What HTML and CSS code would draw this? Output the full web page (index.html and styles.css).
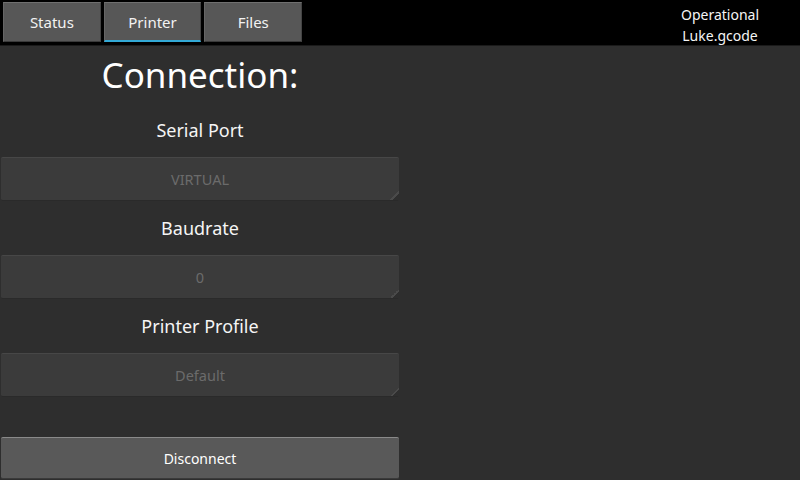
FILE: index.html
```html
<!DOCTYPE html>
<html>
<head>
<meta charset="utf-8">
<link rel="stylesheet" href="styles.css">
</head>
<body>
<div class="screen">
  <header class="topbar">
    <nav class="tabs">
      <div class="tab">Status</div>
      <div class="tab active">Printer</div>
      <div class="tab">Files</div>
    </nav>
    <div class="state">
      <div>Operational</div>
      <div>Luke.gcode</div>
    </div>
  </header>
  <main class="panel">
    <div class="col">
      <h1 class="title">Connection:</h1>
      <div class="label">Serial Port</div>
      <div class="spinner">VIRTUAL</div>
      <div class="label">Baudrate</div>
      <div class="spinner">0</div>
      <div class="label">Printer Profile</div>
      <div class="spinner">Default</div>
      <div class="spacer"></div>
      <div class="button">Disconnect</div>
    </div>
  </main>
</div>
</body>
</html>
```

FILE: styles.css
```css
* { box-sizing: border-box; }
html, body { margin: 0; padding: 0; }
body {
  width: 800px;
  height: 480px;
  overflow: hidden;
  background: #2e2e2e;
  font-family: "Noto Sans", "Open Sans", "DejaVu Sans", sans-serif;
  color: #ffffff;
}
.screen {
  width: 800px;
  height: 480px;
  display: flex;
  flex-direction: column;
}
.topbar {
  height: 46px;
  background: #000000;
  display: flex;
  justify-content: space-between;
  border-bottom: 1px solid #1a1a1a;
}
.tabs {
  display: flex;
  gap: 3px;
  padding: 2px 0 0 3px;
}
.tab {
  width: 97.7px;
  height: 40px;
  background: #575757;
  border-top: 1px solid #707070;
  border-left: 1px solid #666666;
  border-right: 1px solid #444444;
  border-bottom: 1px solid #3a3a3a;
  display: flex;
  align-items: center;
  justify-content: center;
  font-size: 15px;
  color: #f2f2f2;
}
.tab.active {
  border-bottom: 2px solid #33a9d6;
}
.state {
  width: 160px;
  padding-top: 4px;
  text-align: center;
  font-size: 14px;
  line-height: 21px;
  color: #f5f5f5;
}
.panel {
  flex: 1;
  display: flex;
}
.col {
  width: 400px;
  display: flex;
  flex-direction: column;
  padding: 0 1px;
}
.title {
  margin: 0;
  height: 57px;
  font-size: 35px;
  font-weight: normal;
  line-height: 57px;
  text-align: center;
  color: #ffffff;
}
.label {
  height: 54px;
  line-height: 54px;
  font-size: 18px;
  text-align: center;
  color: #f5f5f5;
}
.spinner {
  position: relative;
  height: 44px;
  background: #3b3b3b;
  border-top: 1px solid #474747;
  border-bottom: 1px solid #2a2a2a;
  border-radius: 2px;
  display: flex;
  align-items: center;
  justify-content: center;
  font-size: 14.5px;
  color: #6b6b6b;
}
.spinner::after {
  content: "";
  position: absolute;
  right: 0;
  bottom: 0;
  width: 9px;
  height: 9px;
  background: linear-gradient(135deg, transparent 50%, #4a4a4a 50%, #4a4a4a 62%, #2e2e2e 62%);
}
.spacer { height: 40px; }
.button {
  height: 42px;
  background: #595959;
  border-top: 1px solid #8a8a8a;
  border-bottom: 1px solid #3a3a3a;
  border-radius: 2px;
  display: flex;
  align-items: center;
  justify-content: center;
  font-size: 14px;
  color: #ffffff;
}
```
